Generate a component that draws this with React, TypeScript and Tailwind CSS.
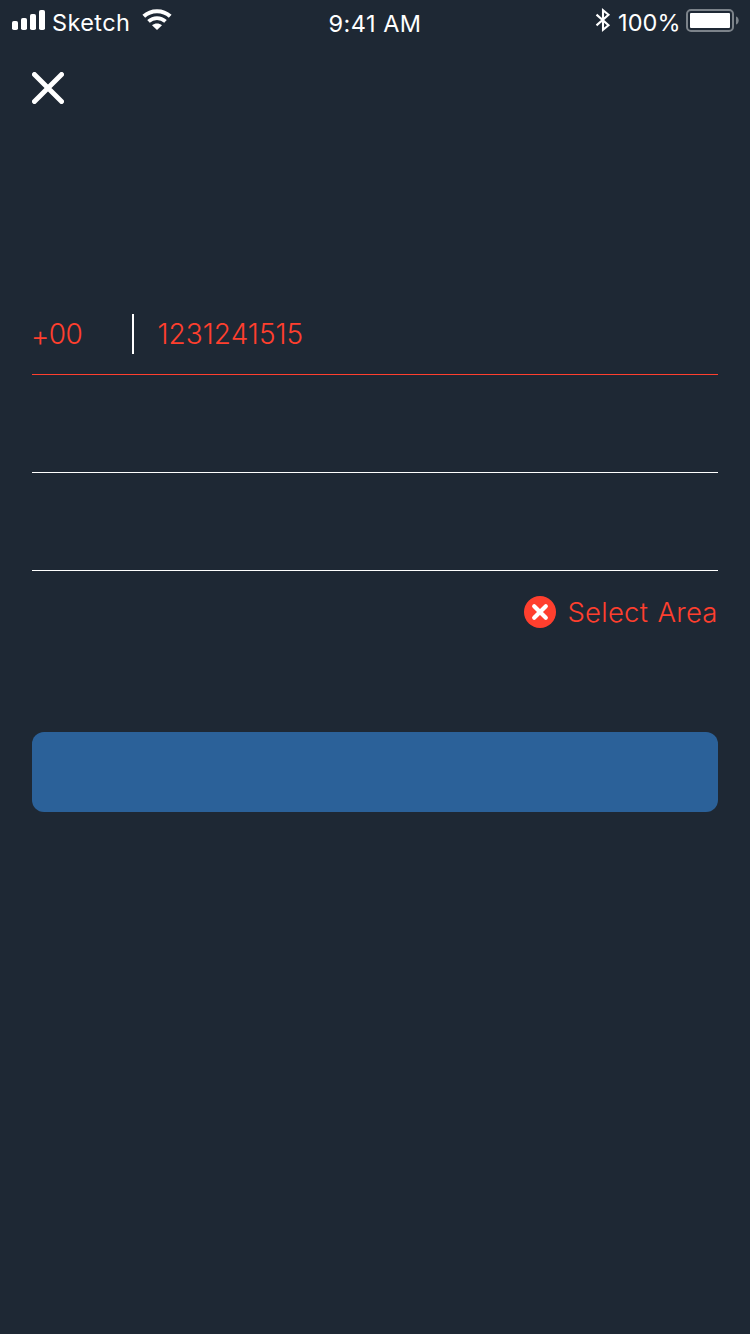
function StatusBar() {
  return (
    <header className="grid h-11 grid-cols-3 text-[23.5px] leading-[46px] text-white">
      <div className="flex pl-3">
        <svg className="mt-[10px] h-5 w-[33px]" viewBox="0 0 33 20" fill="white">
          <rect x="0" y="11" width="6" height="9" rx="1.8" />
          <rect x="9" y="8" width="6" height="12" rx="1.8" />
          <rect x="18" y="4" width="6" height="16" rx="1.8" />
          <rect x="27" y="0" width="6" height="20" rx="1.8" />
        </svg>
        <span className="ml-[7px] w-[90px] tracking-[0.4px] whitespace-nowrap">Sketch</span>
        <svg className="mt-[9px] h-[22px] w-[30px]" viewBox="0 0 30 22" fill="none" stroke="white">
          <path d="M1.8 7.3C9 .5 21 .5 28.2 7.3" strokeWidth="4" />
          <path d="M6.5 12.4C11.5 7.9 18.5 7.9 23.5 12.4" strokeWidth="3.8" />
          <path d="M10 16.3C13 13.8 17 13.8 20 16.3L15 21Z" fill="white" stroke="none" />
        </svg>
      </div>
      <span className="pt-px text-center tracking-[0.5px]">9:41 AM</span>
      <div className="flex justify-end pr-[11px]">
        <svg className="mt-2 h-6 w-4" viewBox="0 0 16 24" fill="none" stroke="white" strokeWidth="2.1">
          <path d="M1.5 6.6L13.5 17.2L8 21.7V2.3L13.5 6.8L1.5 17.4" />
        </svg>
        <span className="ml-[7px] w-[68px] tracking-[0.1px] whitespace-nowrap">100%</span>
        <svg className="mt-[9px] h-[23px] w-[53px]" viewBox="0 0 53 23">
          <rect x="1" y="1" width="46" height="21" rx="4" fill="none" stroke="#7c838a" strokeWidth="2" />
          <rect x="4" y="4" width="40" height="15" rx="1" fill="white" />
          <path d="M50 7.5C53.6 8.5 53.6 14.5 50 15.5Z" fill="#7c838a" />
        </svg>
      </div>
    </header>
  );
}

export default function App() {
  return (
    <div className="flex h-[1334px] w-[750px] flex-col bg-[#1e2834] font-['Inter',sans-serif]">
      <StatusBar />
      <main className="flex flex-col px-8 pt-7 text-[28px] font-light text-[#ff3f2e]">
        <button aria-label="Close" className="size-8">
          <svg viewBox="0 0 32 32" className="size-8" stroke="white" strokeWidth="4.9" strokeLinecap="round">
            <path d="M2.45 2.45L29.55 29.55M29.55 2.45L2.45 29.55" />
          </svg>
        </button>
        <div className="mt-[190px] flex h-[81px] items-center border-b border-[#ff3f2e]">
          <span className="flex w-[100px] pt-0.5 tracking-[-0.5px]">
            <span className="-ml-px pt-0.5">+</span>
            <span>00</span>
          </span>
          <span className="h-10 w-0.5 bg-white" />
          <span className="ml-[23.5px] tracking-[0.04px]">1231241515</span>
        </div>
        <div className="h-[98px] border-b border-white" />
        <div className="h-[98px] border-b border-white" />
        <div className="mt-[21px] flex h-10 items-center justify-end">
          <svg viewBox="0 0 32 32" className="size-8">
            <circle cx="16" cy="16" r="16" fill="#ff3f2e" />
            <path d="M10.2 10.2L21.8 21.8M21.8 10.2L10.2 21.8" stroke="white" strokeWidth="4.2" strokeLinecap="round" />
          </svg>
          <span className="ml-[11.5px] w-[150.5px] pt-0.5 text-[27.5px] tracking-[0.22px] whitespace-nowrap [word-spacing:1.5px]">Select Area</span>
        </div>
        <button aria-label="Continue" className="mt-[100px] h-20 rounded-xl bg-[#2b6199]" />
      </main>
    </div>
  );
}
